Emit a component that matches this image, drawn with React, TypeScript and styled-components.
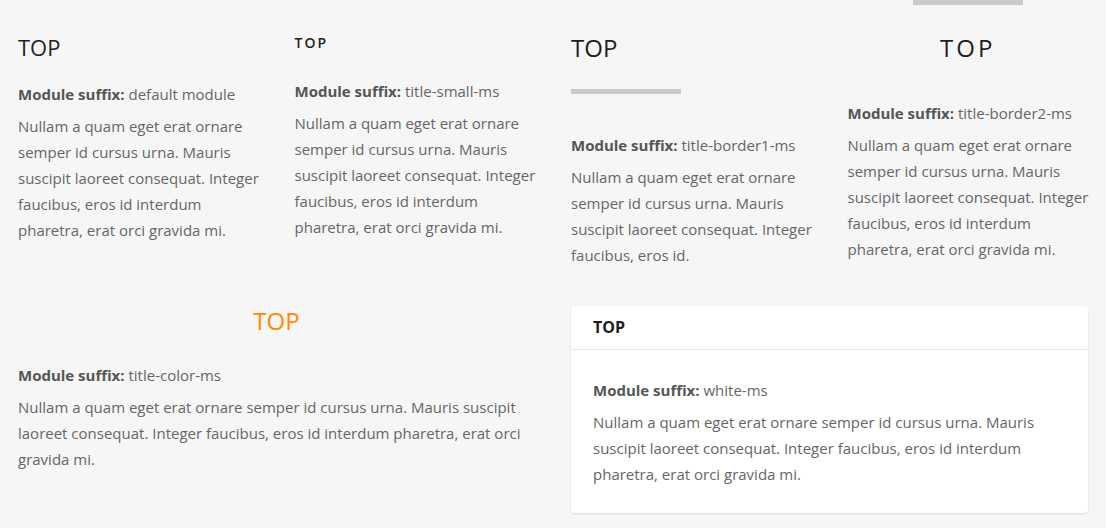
import styled, { createGlobalStyle } from "styled-components";

const GlobalStyle = createGlobalStyle`
  html, body {
    margin: 0;
    padding: 0;
    background: #f6f6f6;
  }
  body {
    font-family: "Open Sans", "Liberation Sans", sans-serif;
    color: #666;
  }
`;

const text =
  "Nullam a quam eget erat ornare semper id cursus urna. Mauris suscipit laoreet consequat. Integer faucibus, eros id interdum pharetra, erat orci gravida mi.";

type Variant = "default" | "small" | "border1" | "border2" | "color";

interface ModuleProps {
  variant: Variant;
  suffix: string;
  body?: string;
}

const Module = (props: ModuleProps) => {
  const { variant, suffix, body = text } = props;

  return (
    <Box>
      {variant === "border2" && <TopBar />}
      <Title $variant={variant}>TOP</Title>
      {variant === "border1" && <UnderBar />}
      <Content $variant={variant}>
        <Suffix>
          <b>Module suffix:</b> {suffix}
        </Suffix>
        <Body>{body}</Body>
      </Content>
    </Box>
  );
};

const WhiteModule = () => (
  <Box>
    <Card>
      <CardHeader>TOP</CardHeader>
      <CardBody>
        <Suffix>
          <b>Module suffix:</b> white-ms
        </Suffix>
        <Body>{text}</Body>
      </CardBody>
    </Card>
  </Box>
);

const App = () => {
  return (
    <Page>
      <GlobalStyle />
      <TopRow>
        <Module variant="default" suffix="default module" />
        <Module variant="small" suffix="title-small-ms" />
        <Module
          variant="border1"
          suffix="title-border1-ms"
          body="Nullam a quam eget erat ornare semper id cursus urna. Mauris suscipit laoreet consequat. Integer faucibus, eros id."
        />
        <Module variant="border2" suffix="title-border2-ms" />
      </TopRow>
      <BottomRow>
        <Module variant="color" suffix="title-color-ms" />
        <WhiteModule />
      </BottomRow>
    </Page>
  );
};

export default App;

const Page = styled.div`
  width: 1106px;
  height: 528px;
  overflow: hidden;
`;

const TopRow = styled.div`
  display: grid;
  grid-template-columns: repeat(4, 1fr);

  & > div {
    padding-right: 10px;
  }
`;

const BottomRow = styled.div`
  display: grid;
  grid-template-columns: repeat(2, 1fr);
  margin-top: 38px;
`;

const Box = styled.div`
  padding: 0 18px;
  display: flex;
  flex-direction: column;
`;

const titleStyles: Record<Variant, string> = {
  default: `
    margin-top: 32px;
    font-size: 22px;
    line-height: 30px;
  `,
  small: `
    margin-top: 33px;
    font-size: 14px;
    line-height: 20px;
    font-weight: 600;
    letter-spacing: 2px;
  `,
  border1: `
    margin-top: 33px;
    font-size: 24px;
    line-height: 30px;
  `,
  border2: `
    margin-top: 28px;
    font-size: 24px;
    line-height: 30px;
    letter-spacing: 3px;
    text-align: center;
    padding-right: 8px;
  `,
  color: `
    margin-top: 0;
    font-size: 24px;
    line-height: 30px;
    text-align: center;
    color: #ff8a00;
  `,
};

const Title = styled.h3<{ $variant: Variant }>`
  margin: 0;
  font-weight: 400;
  color: #1e1e1e;
  ${(p) => titleStyles[p.$variant]}
`;

const contentGap: Record<Variant, number> = {
  default: 19,
  small: 25,
  border1: 38,
  border2: 37,
  color: 26,
};

const Content = styled.div<{ $variant: Variant }>`
  margin-top: ${(p) => contentGap[p.$variant]}px;
`;

const TopBar = styled.div`
  width: 110px;
  height: 5px;
  margin-right: 8px;
  background: #c8cbcc;
  align-self: center;
`;

const UnderBar = styled.div`
  width: 110px;
  height: 5px;
  margin-top: 26px;
  background: #c8cbcc;
`;

const Suffix = styled.p`
  margin: 0 0 6px;
  font-size: 15px;
  line-height: 26px;
  color: #666;

  b {
    font-weight: 700;
    color: #555;
  }
`;

const Body = styled.p`
  margin: 0;
  font-size: 15px;
  line-height: 26px;
  color: #666;
`;

const Card = styled.div`
  background: #fff;
  border-radius: 4px;
  box-shadow: 0 1px 2px rgba(0, 0, 0, 0.12);
`;

const CardHeader = styled.div`
  padding: 10px 22px 11px;
  font-size: 16px;
  line-height: 22px;
  font-weight: 700;
  color: #1e1e1e;
  border-bottom: 1px solid #e8e8e8;
`;

const CardBody = styled.div`
  padding: 27px 22px 26px;
`;
